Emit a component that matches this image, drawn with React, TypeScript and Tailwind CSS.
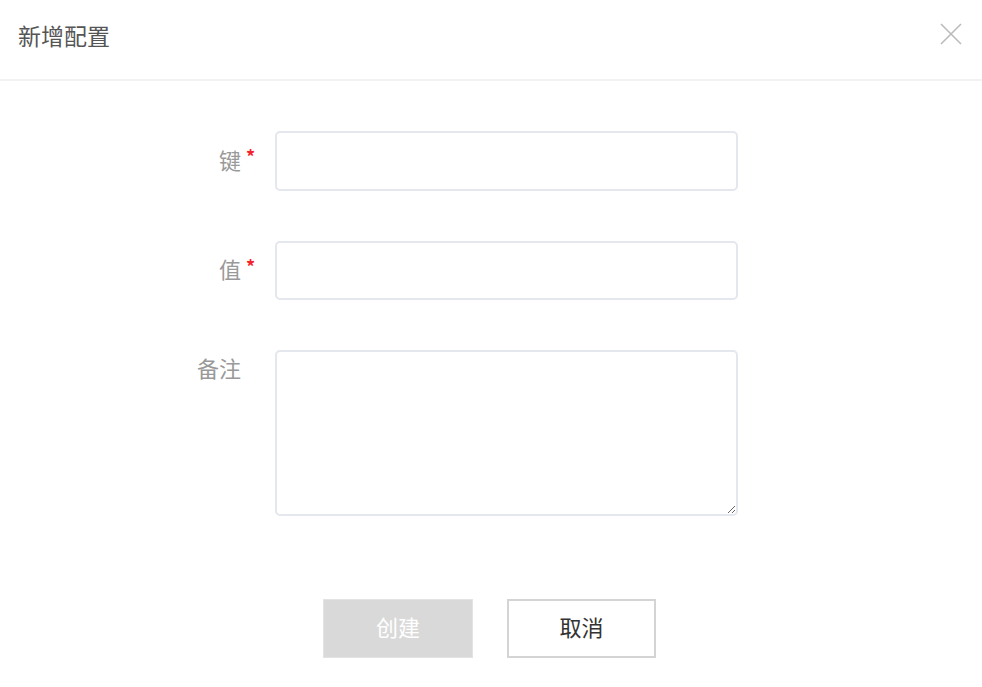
import React from "react";

const font = { fontFamily: '"Noto Sans CJK SC", "Noto Sans", sans-serif' };

function Field({ label, required, children, top }: { label: string; required?: boolean; children: React.ReactNode; top?: boolean }) {
  return (
    <div className={`flex ${top ? "items-start" : "items-center"}`}>
      <div className={`w-[275px] shrink-0 flex justify-end items-center pr-[21px] ${top ? "pt-[2px]" : "-mt-[5px]"}`}>
        <span className="text-[22px] leading-[30px] text-[#999]">{label}</span>
        <span className={`ml-[5px] w-[8px] text-[18px] leading-[22px] font-bold text-[#f5222d] -mt-[5px] ${required ? "" : "invisible"}`}>*</span>
      </div>
      {children}
    </div>
  );
}

export default function App() {
  return (
    <div className="w-[982px] h-[687px] bg-white" style={font}>
      <div className="h-[81px] flex items-center justify-between pl-[18px] pr-[20px] border-b-2 border-[#f2f2f2]">
        <div className="text-[23px] text-[#555] -mt-[9px]">新增配置</div>
        <svg width="22" height="22" viewBox="0 0 22 22" className="-mt-[12px]">
          <path d="M1 1 L21 21 M21 1 L1 21" stroke="#bbb" strokeWidth="1.6" fill="none" />
        </svg>
      </div>
      <div className="pt-[50px]">
        <Field label="键" required>
          <input className="w-[463px] h-[60px] rounded-[5px] border-2 border-[#e4e7ed] outline-none px-3" />
        </Field>
        <div className="h-[50px]" />
        <Field label="值" required>
          <input className="w-[463px] h-[59px] rounded-[5px] border-2 border-[#e4e7ed] outline-none px-3" />
        </Field>
        <div className="h-[50px]" />
        <Field label="备注" top>
          <textarea className="w-[463px] h-[166px] rounded-[5px] border-2 border-[#e4e7ed] outline-none px-3 py-2 block" />
        </Field>
        <div className="flex pl-[323px] gap-[34px] mt-[83px]">
          <button className="w-[150px] h-[59px] bg-[#d9d9d9] text-white text-[22px] border border-[#e3e3e3] pb-[5px]">创建</button>
          <button className="w-[149px] h-[59px] bg-white text-[#333] text-[22px] border-2 border-[#d4d4d4] pb-[5px]">取消</button>
        </div>
      </div>
    </div>
  );
}
